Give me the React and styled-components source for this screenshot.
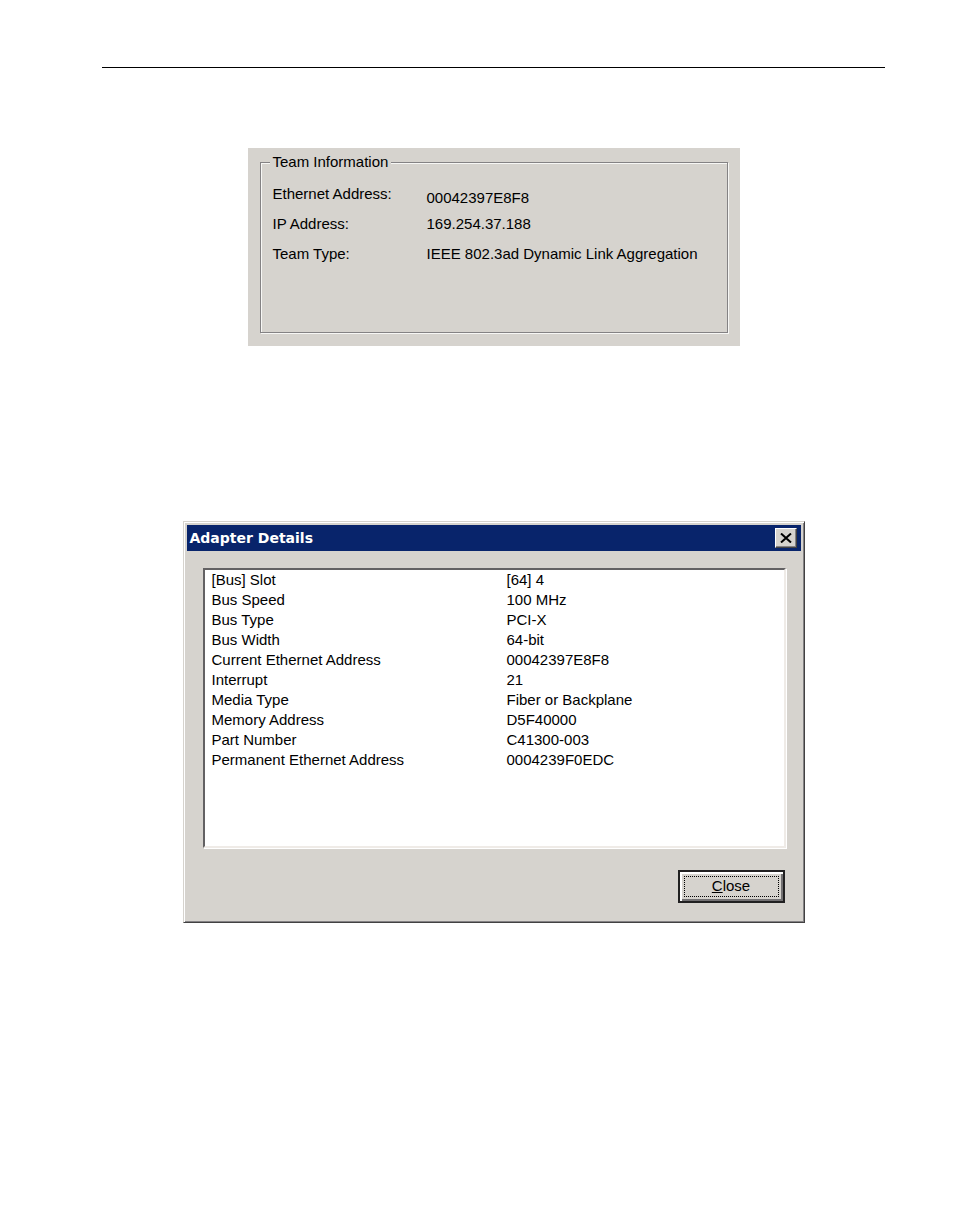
import React from "react";
import styled, { createGlobalStyle } from "styled-components";

const FACE = "#d6d3ce";
const NAVY = "#08246b";

const GlobalStyle = createGlobalStyle`
  * { box-sizing: border-box; }
  body {
    margin: 0;
    background: #fff;
    color: #000;
    font-family: "Liberation Sans", Arial, sans-serif;
    font-size: 15px;
    line-height: 20px;
  }
`;

const Page = styled.main`
  display: flex;
  flex-direction: column;
  align-items: center;
  min-height: 100vh;
  padding: 67px 69px 64px 102px;
`;

const HeaderRule = styled.hr`
  align-self: stretch;
  margin: 0 0 80px;
  border: 0;
  border-top: 1px solid #000;
`;

const InfoPanel = styled.section`
  width: 100%;
  max-width: 492px;
  margin-bottom: 175px;
  padding: 4px 12px 13px;
  background: ${FACE};
`;

const GroupBox = styled.fieldset`
  margin: 0;
  min-width: 0;
  padding: 12px 12px 64px;
  border: 1px solid #848284;
  box-shadow: 1px 1px #f7f7f5, inset 1px 1px #f7f7f5;
`;

const GroupTitle = styled.legend`
  margin-left: -3px;
  padding: 0 3px;
  background: ${FACE};
`;

const InfoList = styled.dl`
  display: grid;
  grid-template-columns: 154px 1fr;
  grid-auto-rows: 24px;
  row-gap: 6px;
  margin: 0;
`;

const InfoLabel = styled.dt``;

const InfoValue = styled.dd`
  margin: 0;
  align-self: ${(p) => (p.$low ? "end" : "start")};
`;

const Dialog = styled.section`
  width: 100%;
  max-width: 622px;
  padding: 2px;
  background: ${FACE};
  border: 1px solid;
  border-color: ${FACE} #424142 #424142 ${FACE};
  box-shadow: inset 1px 1px #fff, inset -1px -1px #848284;
`;

const TitleBar = styled.header`
  display: flex;
  align-items: center;
  justify-content: space-between;
  height: 26px;
  margin: 1px;
  padding: 0 4px 0 3px;
  background: ${NAVY};
`;

const Title = styled.h1`
  margin: 0;
  color: #fff;
  font: bold 14px/20px "DejaVu Sans", sans-serif;
`;

const BevelButton = styled.button`
  display: flex;
  align-items: center;
  justify-content: center;
  padding: 0;
  color: #000;
  font: inherit;
  background: ${FACE};
  border: 1px solid;
  border-color: #fff #424142 #424142 #fff;
  border-radius: 0;
  box-shadow: inset -1px -1px #848284;
`;

const TitleClose = styled(BevelButton)`
  width: 22px;
  height: 20px;
`;

const DialogBody = styled.div`
  display: flex;
  flex-direction: column;
  align-items: flex-end;
  gap: 22px;
  padding: 16px 16px 17px 17px;
`;

const ListFrame = styled.div`
  width: 100%;
  min-height: 280px;
  padding: 0 7px;
  background: #fff;
  border: 2px solid;
  border-color: #636163 #efebe7 #efebe7 #636163;
  box-shadow: 1px 1px #fff;
`;

const DetailTable = styled.table`
  width: 100%;
  table-layout: fixed;
  border-collapse: collapse;
`;

const DetailName = styled.th`
  width: 295px;
  padding: 0;
  font-weight: normal;
  text-align: left;
`;

const DetailValue = styled.td`
  padding: 0;
`;

const CloseButton = styled(BevelButton)`
  width: 107px;
  height: 33px;
  margin-right: 1px;
  padding: 4px;
  border: 2px solid #212021;
  box-shadow: inset 1px 1px #fff, inset 2px 2px #fff, inset -2px -2px #737173;
`;

const FocusFrame = styled.span`
  display: block;
  width: 100%;
  height: 21px;
  line-height: 18px;
  border: 1px dotted #000;
`;

const info = [
  ["Ethernet Address:", "00042397E8F8"],
  ["IP Address:", "169.254.37.188"],
  ["Team Type:", "IEEE 802.3ad Dynamic Link Aggregation"],
];

const details = [
  ["[Bus] Slot", "[64] 4"],
  ["Bus Speed", "100 MHz"],
  ["Bus Type", "PCI-X"],
  ["Bus Width", "64-bit"],
  ["Current Ethernet Address", "00042397E8F8"],
  ["Interrupt", "21"],
  ["Media Type", "Fiber or Backplane"],
  ["Memory Address", "D5F40000"],
  ["Part Number", "C41300-003"],
  ["Permanent Ethernet Address", "0004239F0EDC"],
];

export default function App() {
  return (
    <>
      <GlobalStyle />
      <Page>
        <HeaderRule />
        <InfoPanel>
          <GroupBox>
            <GroupTitle>Team Information</GroupTitle>
            <InfoList>
              {info.map(([label, value], i) => (
                <React.Fragment key={label}>
                  <InfoLabel>{label}</InfoLabel>
                  <InfoValue $low={i === 0}>{value}</InfoValue>
                </React.Fragment>
              ))}
            </InfoList>
          </GroupBox>
        </InfoPanel>
        <Dialog role="dialog" aria-labelledby="details-title">
          <TitleBar>
            <Title id="details-title">Adapter Details</Title>
            <TitleClose type="button" aria-label="Close window">
              <svg width="12" height="10" viewBox="0 0 12 10" aria-hidden="true">
                <path d="M1 0.5L11 9.5M11 0.5L1 9.5" stroke="#000" strokeWidth="2" />
              </svg>
            </TitleClose>
          </TitleBar>
          <DialogBody>
            <ListFrame>
              <DetailTable>
                <tbody>
                  {details.map(([name, value]) => (
                    <tr key={name}>
                      <DetailName scope="row">{name}</DetailName>
                      <DetailValue>{value}</DetailValue>
                    </tr>
                  ))}
                </tbody>
              </DetailTable>
            </ListFrame>
            <CloseButton type="button">
              <FocusFrame>
                <u>C</u>lose
              </FocusFrame>
            </CloseButton>
          </DialogBody>
        </Dialog>
      </Page>
    </>
  );
}
